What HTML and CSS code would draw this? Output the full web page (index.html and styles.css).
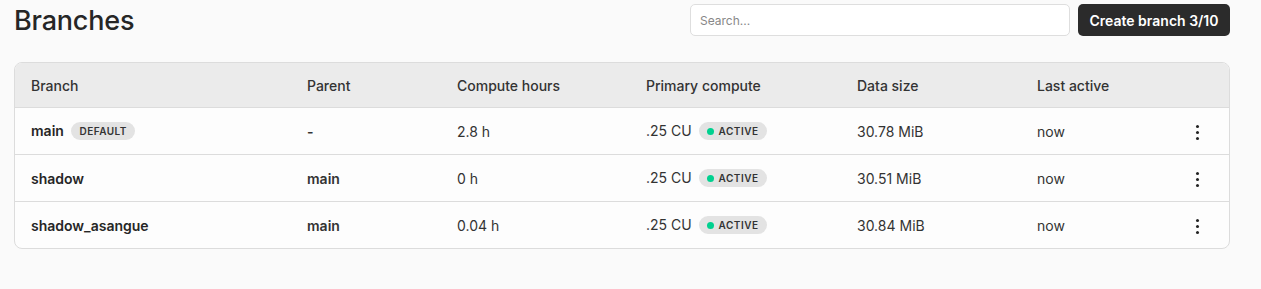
FILE: index.html
```html
<!DOCTYPE html>
<html lang="en">
<head>
    <meta charset="UTF-8">
    <meta name="viewport" content="width=device-width, initial-scale=1.0">
    <title>Branches</title>
    <link rel="stylesheet" href="styles.css">
</head>
<body>
    <div class="page">
        <header class="topbar">
            <h1>Branches</h1>
            <div class="actions">
                <input type="text" class="search" placeholder="Search...">
                <button type="button" class="create">Create branch 3/10</button>
            </div>
        </header>

        <div class="table-wrap">
            <table class="branches">
                <thead>
                    <tr>
                        <th class="col-branch">Branch</th>
                        <th class="col-parent">Parent</th>
                        <th class="col-hours">Compute hours</th>
                        <th class="col-compute">Primary compute</th>
                        <th class="col-size">Data size</th>
                        <th class="col-active">Last active</th>
                        <th class="col-menu"></th>
                    </tr>
                </thead>
                <tbody>
                    <tr>
                        <td class="name">main <span class="badge">DEFAULT</span></td>
                        <td class="parent"><span>-</span></td>
                        <td>2.8 h</td>
                        <td>.25 CU <span class="badge status"><i class="dot"></i>ACTIVE</span></td>
                        <td>30.78 MiB</td>
                        <td>now</td>
                        <td class="menu"><span class="kebab"><i></i><i></i><i></i></span></td>
                    </tr>
                    <tr>
                        <td class="name">shadow</td>
                        <td class="parent"><span>main</span></td>
                        <td>0 h</td>
                        <td>.25 CU <span class="badge status"><i class="dot"></i>ACTIVE</span></td>
                        <td>30.51 MiB</td>
                        <td>now</td>
                        <td class="menu"><span class="kebab"><i></i><i></i><i></i></span></td>
                    </tr>
                    <tr>
                        <td class="name">shadow_asangue</td>
                        <td class="parent"><span>main</span></td>
                        <td>0.04 h</td>
                        <td>.25 CU <span class="badge status"><i class="dot"></i>ACTIVE</span></td>
                        <td>30.84 MiB</td>
                        <td>now</td>
                        <td class="menu"><span class="kebab"><i></i><i></i><i></i></span></td>
                    </tr>
                </tbody>
            </table>
        </div>
    </div>
</body>
</html>
```

FILE: styles.css
```css
body {
    font-family: 'Inter', 'Liberation Sans', sans-serif;
    margin: 0;
    padding: 0;
    background-color: #fafafa;
    color: #2b2b2b;
}

.page {
    width: 1216px;
    margin-left: 14px;
}

.topbar {
    display: flex;
    justify-content: space-between;
    align-items: center;
    height: 40px;
}

.topbar h1 {
    margin: 0;
    font-size: 27px;
    font-weight: 500;
    color: #262626;
    letter-spacing: -0.2px;
}

.actions {
    display: flex;
    gap: 8px;
}

.search {
    width: 380px;
    height: 32px;
    box-sizing: border-box;
    padding: 0 9px;
    border: 1px solid #dedede;
    border-radius: 5px;
    background-color: #fff;
    font-family: inherit;
    font-size: 12px;
    color: #333;
}

.search::placeholder {
    color: #888;
}

.create {
    width: 152px;
    height: 32px;
    padding: 0;
    border: none;
    border-radius: 5px;
    background-color: #2b2b2b;
    color: #fff;
    font-family: inherit;
    font-size: 14px;
    font-weight: 600;
    cursor: pointer;
}

.table-wrap {
    margin-top: 22px;
    border: 1px solid #dcdcdc;
    border-radius: 8px;
    overflow: hidden;
    background-color: #fdfdfd;
}

.branches {
    width: 100%;
    border-collapse: collapse;
    font-size: 14px;
}

.branches th {
    height: 44px;
    padding: 0 16px;
    text-align: left;
    font-weight: 500;
    color: #333;
    background-color: #ebebeb;
    border-bottom: 1px solid #dcdcdc;
}

.branches td {
    height: 46px;
    padding: 0 16px;
    color: #333;
    border-bottom: 1px solid #dcdcdc;
}

.branches tbody tr:last-child td {
    border-bottom: none;
}

.col-branch { width: 244px; }
.col-parent { width: 118px; }
.col-hours { width: 157px; }
.col-compute { width: 179px; }
.col-size { width: 148px; }
.col-active { width: 120px; }

.branches td.name {
    font-weight: 600;
    color: #262626;
}

.branches td.parent {
    font-weight: 600;
}

.parent span {
    vertical-align: -1px;
}

.badge {
    display: inline-flex;
    align-items: center;
    height: 18px;
    padding: 0 8px;
    margin-left: 4px;
    border-radius: 9px;
    background-color: #e3e3e3;
    font-size: 10px;
    font-weight: 600;
    letter-spacing: 0.5px;
    color: #333;
    vertical-align: 1px;
}

.status {
    padding: 0 8px 0 8px;
    margin-left: 3px;
}

.dot {
    width: 7px;
    height: 7px;
    margin-right: 5px;
    border-radius: 50%;
    background-color: #00d18f;
}

.branches td.menu {
    text-align: right;
    padding-right: 30px;
}

.kebab {
    display: inline-flex;
    flex-direction: column;
    gap: 3px;
    vertical-align: middle;
}

.kebab i {
    width: 3px;
    height: 3px;
    border-radius: 50%;
    background-color: #222;
}
```
